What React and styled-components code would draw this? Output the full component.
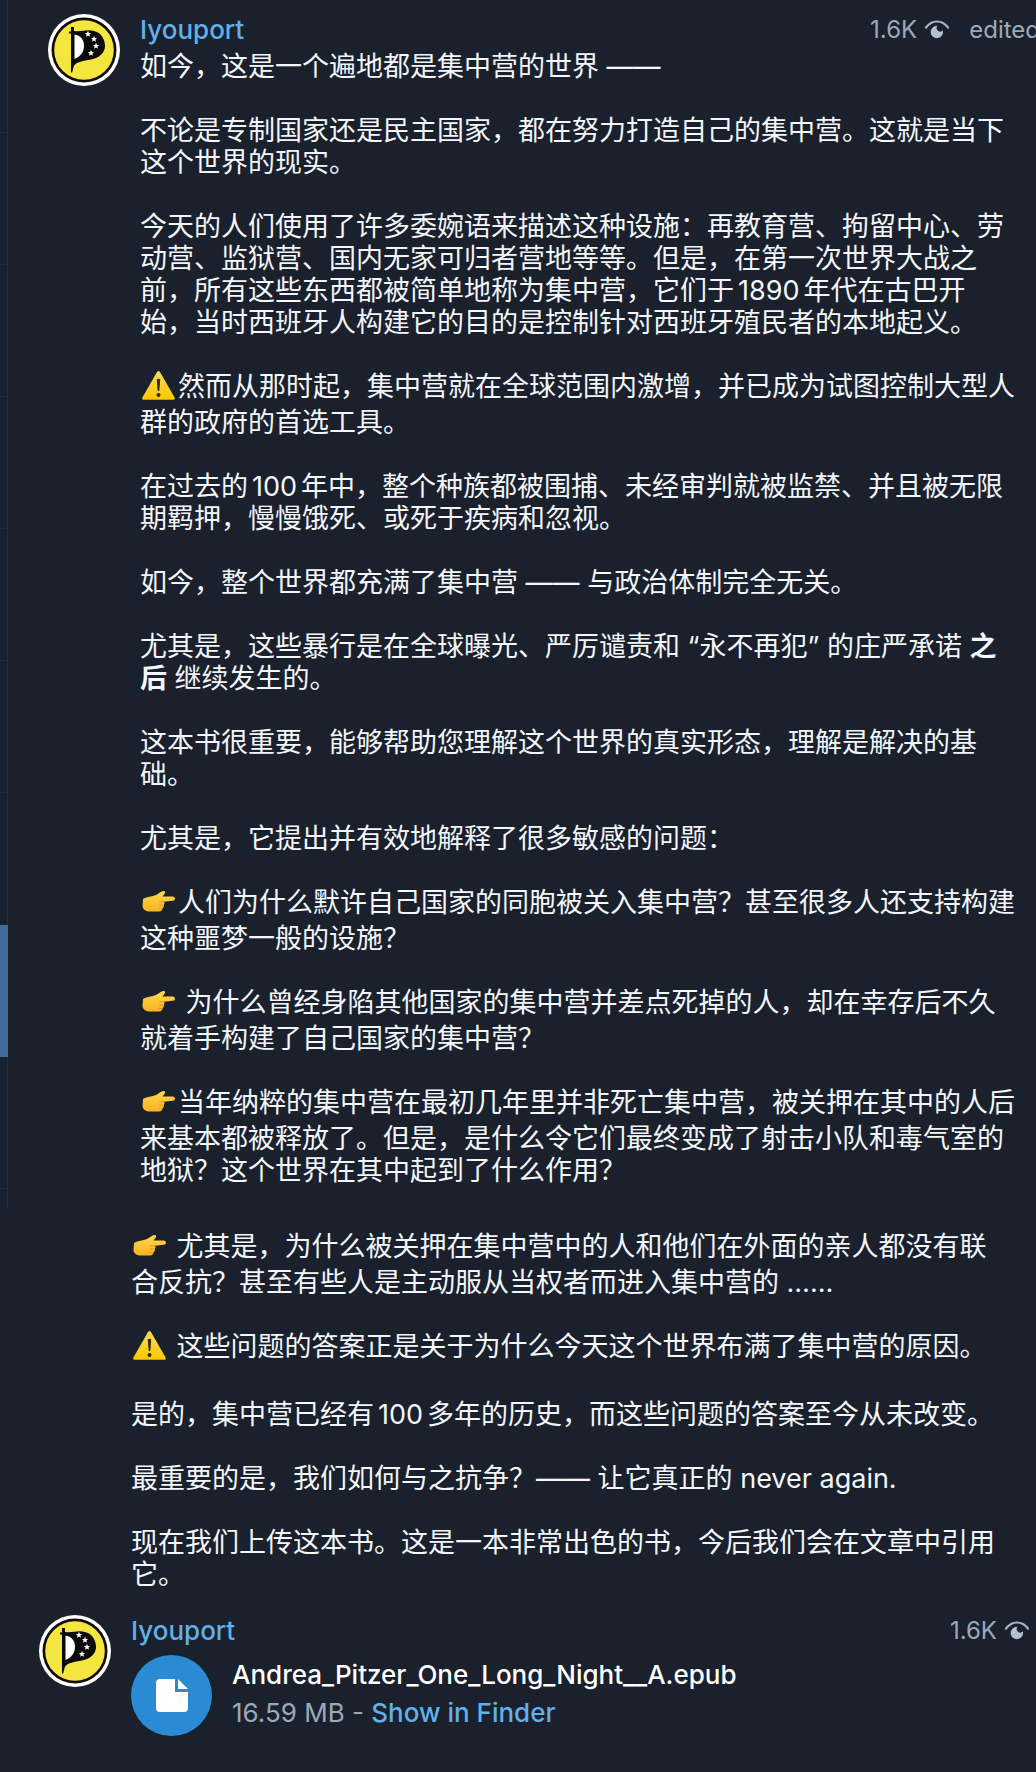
import React from "react";
import styled, { createGlobalStyle } from "styled-components";

const GlobalStyle = createGlobalStyle`
  *, *::before, *::after { box-sizing: border-box; }
  body {
    margin: 0;
    background: #1a212c;
    color: #f3f6fa;
    font-family: Inter, "Noto Sans CJK SC", sans-serif;
    font-size: 27px;
    line-height: 32px;
    text-spacing-trim: space-all;
    -webkit-font-smoothing: antialiased;
  }
  p, h2 { margin: 0; }
`;

const Page = styled.main`
  overflow-x: hidden;
`;

const Segment = styled.div`
  display: flex;
`;

const ChatStrip = styled.nav`
  flex: none;
  width: 8px;
  padding-top: 1px;
  border-right: 1px solid #262f3b;
  background: #17202e;
`;

const ChatRow = styled.div`
  height: 132px;
  margin-right: ${(p) => (p.$active ? "-1px" : "0")};
  border-bottom: 1px solid ${(p) => (p.$active ? "#3f6c9b" : "#222c39")};
  background: ${(p) => (p.$active ? "#3f6c9b" : "transparent")};
`;

const Feed = styled.div`
  flex: 1;
  min-width: 0;
  padding: ${(p) => (p.$continued ? "23px 16px 35px 39px" : "14px 16px 21px 40px")};
`;

const Message = styled.article`
  display: grid;
  grid-template-columns: 72px minmax(0, 1fr);
  column-gap: 20px;
`;

const Content = styled.div`
  grid-column: 2;
  min-width: 0;
`;

const Header = styled.header`
  display: flex;
  justify-content: space-between;
  padding-bottom: ${(p) => (p.$roomy ? "8px" : "5px")};
`;

const Author = styled.h2`
  color: #62b0ea;
  font-size: 26px;
  font-weight: 500;
  line-height: 32px;
`;

const Meta = styled.div`
  display: flex;
  align-items: center;
  gap: 8px;
  margin-right: ${(p) => (p.$bleed ? "-20px" : "-9px")};
  color: #9ba9b9;
  font-size: 24px;
  line-height: 32px;
  white-space: nowrap;
`;

const Edited = styled.span`
  padding-left: 12px;
`;

const Body = styled.div`
  display: grid;
  row-gap: 32px;
  padding-right: ${(p) => (p.$spaced ? "14px" : "4px")};
  margin-bottom: ${(p) => (p.$spaced ? "24px" : "0")};
`;

const Figure = styled.span`
  margin: 0 4px;
`;

const Emoji = styled.svg`
  width: 33px;
  height: 36px;
  margin: 0 3px 0 2px;
  vertical-align: top;
`;

const FileRow = styled.div`
  display: flex;
  align-items: center;
  gap: 20px;
`;

const FileButton = styled.button`
  display: grid;
  place-items: center;
  flex: none;
  width: 81px;
  height: 81px;
  padding: 0;
  border: 0;
  border-radius: 50%;
  background: #2a8ad4;
`;

const FileText = styled.div`
  min-width: 0;
  padding-bottom: 4px;
  font-size: 26px;
  line-height: 38px;
`;

const FileName = styled.p`
  color: #ffffff;
  font-weight: 500;
`;

const FileInfo = styled.p`
  color: #9ba9b9;
`;

const FinderLink = styled.a`
  color: #62b0ea;
  font-weight: 500;
  text-decoration: none;
`;

const STAR = "M0-3.2L.9-1.1 3.1-.9 1.4.5 2 2.8 0 1.6-2 2.8-1.4.5-3.1-.9-.9-1.1Z";
const STARS = [[40, 20], [46, 25], [48, 32], [43, 39]];

function Avatar() {
  return (
    <svg width="72" height="72" viewBox="0 0 72 72" role="img" aria-label="Iyouport">
      <circle cx="36" cy="36" r="36" fill="#fff" />
      <circle cx="36" cy="36" r="32.5" fill="#120d0c" />
      <circle cx="36" cy="36" r="29.8" fill="#f4e63e" />
      <path
        d="M26 17C34 18 39 15 46 17C54 19 57 26 57 32C57 39 51 44 43 45.500C35 47 29 48 26.500 51C25 53 25 56 24 59L23 58V13H26Z"
        fill="#0b0909"
      />
      <path d="M21 18.500H27" stroke="#0b0909" strokeWidth="2" />
      <path d="M26.500 20.500C33 21.500 36 26 36 32C36 38 32 43 26.500 45Z" fill="#fff" />
      {STARS.map(([x, y]) => (
        <path key={x} d={STAR} transform={`translate(${x} ${y})`} fill="#fff" />
      ))}
    </svg>
  );
}

function Eye() {
  return (
    <svg width="24" height="20" viewBox="0 0 24 20" role="img" aria-label="views">
      <path d="M1 7.500C7-.5 17-.5 23 7.500" fill="none" stroke="#a6b4c4" strokeWidth="2.200" strokeLinecap="round" />
      <path d="M12.500 5.800A3.400 3.400 0 0 0 17.800 10.200A6.200 6.200 0 1 1 12.500 5.800Z" fill="#b3c0cf" />
    </svg>
  );
}

function Warning() {
  return (
    <Emoji viewBox="0 0 33 36" role="img" aria-label="warning">
      <defs>
        <linearGradient id="warn" x1="0" y1="0" x2="0" y2="1">
          <stop offset="0" stopColor="#f9d858" />
          <stop offset="1" stopColor="#fbc900" />
        </linearGradient>
      </defs>
      <path d="M15 1Q16.500-.8 18 1L32.600 26.500Q33.200 28.800 31 29H2Q-.2 28.800 .4 26.500Z" fill="url(#warn)" />
      <path d="M1 28.500H32" stroke="#c9922a" strokeWidth="1" />
      <path d="M14.800 8.500Q16.500 6.800 18.200 8.500L17.400 19.500Q16.500 20.500 15.600 19.500Z" fill="#332a18" />
      <circle cx="16.500" cy="24" r="2" fill="#332a18" />
    </Emoji>
  );
}

function Point() {
  return (
    <Emoji viewBox="0 0 33 36" role="img" aria-label="pointing right">
      <defs>
        <linearGradient id="hand" x1="0" y1="0" x2="0" y2="1">
          <stop offset="0" stopColor="#ffd94f" />
          <stop offset="1" stopColor="#f9b21f" />
        </linearGradient>
      </defs>
      <path
        d="M1 12C5 9.500 10 10 14 8C17 6.500 19 4 21.500 4C23.500 4 23.500 6 22 7.500L20.500 9.500H31Q33 9.800 33 11.700Q33 13.500 31 13.800L22 14.800Q23.500 16.500 21.800 18Q22.600 20 20.500 21.300Q20.500 24.300 17 24.500H8C4 24.500 1 23 .5 19Z"
        fill="url(#hand)"
      />
      <path d="M21.500 14.800H17.500M21.500 18H17.500M20 21.400H16.500" fill="none" stroke="#e39a1c" strokeWidth="1" strokeLinecap="round" />
    </Emoji>
  );
}

const CHAT_ROWS = [0, 1, 2, 3, 4, 5, 6, 7, 8];

export default function App() {
  return (
    <Page lang="zh-CN">
      <GlobalStyle />
      <Segment>
        <ChatStrip aria-label="Chats">
          {CHAT_ROWS.map((row) => (
            <ChatRow key={row} $active={row === 7} />
          ))}
        </ChatStrip>
        <Feed>
          <Message>
            <Avatar />
            <Content>
              <Header>
                <Author>Iyouport</Author>
                <Meta $bleed>
                  <span>1.6K</span>
                  <Eye />
                  <Edited>edited</Edited>
                </Meta>
              </Header>
              <Body>
                <p>如今，这是一个遍地都是集中营的世界 ——</p>
                <p>不论是专制国家还是民主国家，都在努力打造自己的集中营。这就是当下这个世界的现实。</p>
                <p>今天的人们使用了许多委婉语来描述这种设施：再教育营、拘留中心、劳动营、监狱营、国内无家可归者营地等等。但是，在第一次世界大战之前，所有这些东西都被简单地称为集中营，它们于<Figure>1890</Figure>年代在古巴开始，当时西班牙人构建它的目的是控制针对西班牙殖民者的本地起义。</p>
                <p><Warning />然而从那时起，集中营就在全球范围内激增，并已成为试图控制大型人群的政府的首选工具。</p>
                <p>在过去的<Figure>100</Figure>年中，整个种族都被围捕、未经审判就被监禁、并且被无限期羁押，慢慢饿死、或死于疾病和忽视。</p>
                <p>如今，整个世界都充满了集中营 —— 与政治体制完全无关。</p>
                <p>尤其是，这些暴行是在全球曝光、严厉谴责和 “永不再犯” 的庄严承诺 <strong>之后</strong> 继续发生的。</p>
                <p>这本书很重要，能够帮助您理解这个世界的真实形态，理解是解决的基础。</p>
                <p>尤其是，它提出并有效地解释了很多敏感的问题：</p>
                <p><Point />人们为什么默许自己国家的同胞被关入集中营？甚至很多人还支持构建这种噩梦一般的设施？</p>
                <p><Point /> 为什么曾经身陷其他国家的集中营并差点死掉的人，却在幸存后不久就着手构建了自己国家的集中营？</p>
                <p><Point />当年纳粹的集中营在最初几年里并非死亡集中营，被关押在其中的人后来基本都被释放了。但是，是什么令它们最终变成了射击小队和毒气室的地狱？这个世界在其中起到了什么作用？</p>
              </Body>
            </Content>
          </Message>
        </Feed>
      </Segment>
      <Segment>
        <Feed $continued>
          <Message>
            <Content>
              <Body $spaced>
                <p><Point /> 尤其是，为什么被关押在集中营中的人和他们在外面的亲人都没有联合反抗？甚至有些人是主动服从当权者而进入集中营的 ……</p>
                <p><Warning /> 这些问题的答案正是关于为什么今天这个世界布满了集中营的原因。</p>
                <p>是的，集中营已经有<Figure>100</Figure>多年的历史，而这些问题的答案至今从未改变。</p>
                <p>最重要的是，我们如何与之抗争？—— 让它真正的 never again.</p>
                <p>现在我们上传这本书。这是一本非常出色的书，今后我们会在文章中引用它。</p>
              </Body>
            </Content>
          </Message>
          <Message>
            <Avatar />
            <Content>
              <Header $roomy>
                <Author>Iyouport</Author>
                <Meta>
                  <span>1.6K</span>
                  <Eye />
                </Meta>
              </Header>
              <FileRow>
                <FileButton type="button" aria-label="Open file">
                  <svg width="32" height="33" viewBox="0 0 32 33" aria-hidden="true">
                    <path d="M4 0H19V13H32V29Q32 33 28 33H4Q0 33 0 29V4Q0 0 4 0Z" fill="#fff" />
                    <path d="M22 0L32 10H22Z" fill="#fff" />
                  </svg>
                </FileButton>
                <FileText>
                  <FileName>Andrea_Pitzer_One_Long_Night__A.epub</FileName>
                  <FileInfo>
                    16.59 MB - <FinderLink href="#finder">Show in Finder</FinderLink>
                  </FileInfo>
                </FileText>
              </FileRow>
            </Content>
          </Message>
        </Feed>
      </Segment>
    </Page>
  );
}
